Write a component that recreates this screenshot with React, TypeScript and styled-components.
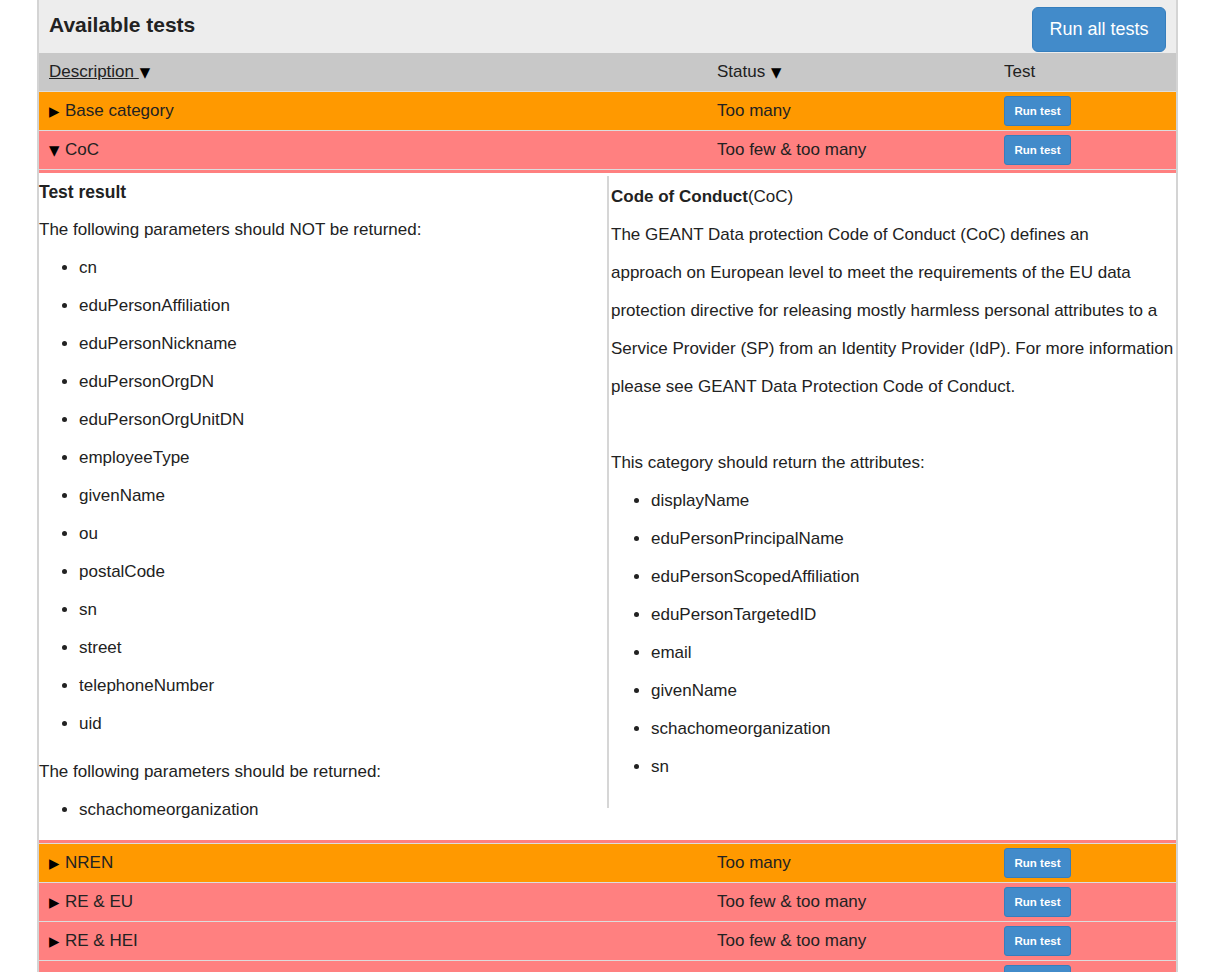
import React from "react";
import styled, { createGlobalStyle } from "styled-components";

const GlobalStyle = createGlobalStyle`
  html, body {
    margin: 0;
    padding: 0;
    background: #ffffff;
  }
  body {
    font-family: "Liberation Sans", Arial, Helvetica, sans-serif;
    color: #222222;
    font-size: 17px;
  }
  * { box-sizing: border-box; }
`;

type Tone = "header" | "orange" | "red";

const toneBg: Record<Tone, string> = {
  header: "#c8c8c8",
  orange: "#ff9900",
  red: "#ff8080",
};

const Page = styled.div`
  margin-left: 37px;
  width: 1141px;
  border-left: 2px solid #d4d4d4;
  border-right: 2px solid #d4d4d4;
  min-height: 1000px;
`;

const TitleBar = styled.div`
  display: flex;
  justify-content: space-between;
  align-items: flex-start;
  height: 53px;
  padding: 7px 10px 0 10px;
  background: #ededed;
`;

const Title = styled.h2`
  margin: 6px 0 0 0;
  font-size: 21px;
  line-height: 24px;
  font-weight: 700;
  color: #222;
`;

const RunAllButton = styled.button`
  width: 134px;
  height: 45px;
  border: 1px solid #357ebd;
  border-radius: 6px;
  background: #428bca;
  color: #ffffff;
  font-family: "Liberation Sans", Arial, sans-serif;
  font-size: 18px;
  padding: 0;
  cursor: pointer;
`;

const Row = styled.div<{ $tone: Tone }>`
  display: grid;
  grid-template-columns: 668px 287px 1fr;
  align-items: center;
  height: 39px;
  border-bottom: 1px solid #dddddd;
  background: ${(p) => toneBg[p.$tone]};
  font-size: 17px;
  color: #222;
`;

const Cell = styled.div`
  display: flex;
  align-items: center;
  padding-left: 10px;
  white-space: nowrap;
`;

const Caret = styled.span<{ $trailing?: boolean }>`
  display: inline-block;
  width: ${(p) => (p.$trailing ? "12px" : "16px")};
  margin-left: ${(p) => (p.$trailing ? "1px" : "0")};
  font-family: "DejaVu Sans", sans-serif;
  font-size: 13.5px;
  color: #000;
`;

const SortLink = styled.a`
  color: #222;
  text-decoration: underline;
  white-space: pre;
  cursor: pointer;
`;

const Label = styled.span`
  white-space: pre;
`;

const RunTestButton = styled.button`
  width: 67px;
  height: 30px;
  border: 1px solid #357ebd;
  border-radius: 3px;
  background: #428bca;
  color: #ffffff;
  font-family: "Liberation Sans", Arial, sans-serif;
  font-size: 11.5px;
  font-weight: 700;
  padding: 0;
  cursor: pointer;
`;

const DetailWrap = styled.div`
  background: #ff8080;
  padding: 3px 0;
  border-bottom: 1px solid #dddddd;
`;

const Panel = styled.div`
  display: grid;
  grid-template-columns: 568px 1fr;
  align-items: start;
  background: #ffffff;
  padding-bottom: 1px;
`;

const LeftCol = styled.div`
  line-height: 38px;
  font-size: 17px;
`;

const RightCol = styled.div`
  margin-top: 3px;
  border-left: 2px solid #d6d6d6;
  padding: 2px 0 12px 2px;
  line-height: 38px;
  font-size: 17px;
`;

const Heading = styled.div`
  font-weight: 700;
  font-size: 17.5px;
`;

const Para = styled.p`
  margin: 0;
`;

const Spacer = styled.div`
  height: 38px;
`;

const List = styled.ul`
  margin: 0 0 10px 0;
  padding-left: 40px;
  list-style: disc;
`;

const Item = styled.li`
  line-height: 38px;
`;

type TestRow = { name: string; status: string; tone: Tone };

const before: TestRow[] = [
  { name: "Base category", status: "Too many", tone: "orange" },
];

const after: TestRow[] = [
  { name: "NREN", status: "Too many", tone: "orange" },
  { name: "RE & EU", status: "Too few & too many", tone: "red" },
  { name: "RE & HEI", status: "Too few & too many", tone: "red" },
  { name: "R&S", status: "Too few & too many", tone: "red" },
];

const notReturned = [
  "cn",
  "eduPersonAffiliation",
  "eduPersonNickname",
  "eduPersonOrgDN",
  "eduPersonOrgUnitDN",
  "employeeType",
  "givenName",
  "ou",
  "postalCode",
  "sn",
  "street",
  "telephoneNumber",
  "uid",
];

const shouldReturn = [
  "displayName",
  "eduPersonPrincipalName",
  "eduPersonScopedAffiliation",
  "eduPersonTargetedID",
  "email",
  "givenName",
  "schachomeorganization",
  "sn",
];

const TestLine: React.FC<{ row: TestRow; open?: boolean }> = ({ row, open }) => (
  <Row $tone={row.tone}>
    <Cell>
      <Caret>{open ? "▼" : "▶"}</Caret>
      {row.name}
    </Cell>
    <Cell>{row.status}</Cell>
    <Cell>
      <RunTestButton>Run test</RunTestButton>
    </Cell>
  </Row>
);

export default function App() {
  return (
    <>
      <GlobalStyle />
      <Page>
        <TitleBar>
          <Title>Available tests</Title>
          <RunAllButton>Run all tests</RunAllButton>
        </TitleBar>

        <Row $tone="header">
          <Cell>
            <SortLink>Description </SortLink>
            <Caret $trailing>▼</Caret>
          </Cell>
          <Cell>
            <Label>Status </Label>
            <Caret $trailing>▼</Caret>
          </Cell>
          <Cell>Test</Cell>
        </Row>

        {before.map((r) => (
          <TestLine key={r.name} row={r} />
        ))}

        <TestLine row={{ name: "CoC", status: "Too few & too many", tone: "red" }} open />

        <DetailWrap>
          <Panel>
            <LeftCol>
              <Heading>Test result</Heading>
              <Para>The following parameters should NOT be returned:</Para>
              <List>
                {notReturned.map((a) => (
                  <Item key={a}>{a}</Item>
                ))}
              </List>
              <Para>The following parameters should be returned:</Para>
              <List>
                <Item>schachomeorganization</Item>
              </List>
            </LeftCol>
            <RightCol>
              <Para>
                <b>Code of Conduct</b>(CoC)
              </Para>
              <Para>
                The GEANT Data protection Code of Conduct (CoC) defines an
                <br />
                approach on European level to meet the requirements of the EU data
                <br />
                protection directive for releasing mostly harmless personal attributes to a
                <br />
                Service Provider (SP) from an Identity Provider (IdP). For more information
                <br />
                please see GEANT Data Protection Code of Conduct.
              </Para>
              <Spacer />
              <Para>This category should return the attributes:</Para>
              <List>
                {shouldReturn.map((a) => (
                  <Item key={a}>{a}</Item>
                ))}
              </List>
            </RightCol>
          </Panel>
        </DetailWrap>

        {after.map((r) => (
          <TestLine key={r.name} row={r} />
        ))}
      </Page>
    </>
  );
}
